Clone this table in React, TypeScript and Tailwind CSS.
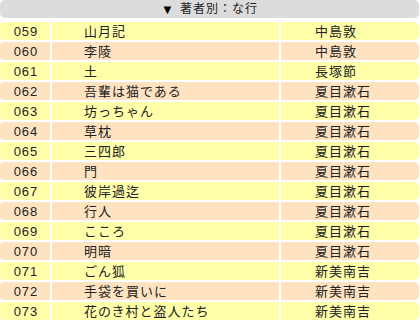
const rows: [string, string, string][] = [
  ['059', '山月記', '中島敦'],
  ['060', '李陵', '中島敦'],
  ['061', '土', '長塚節'],
  ['062', '吾輩は猫である', '夏目漱石'],
  ['063', '坊っちゃん', '夏目漱石'],
  ['064', '草枕', '夏目漱石'],
  ['065', '三四郎', '夏目漱石'],
  ['066', '門', '夏目漱石'],
  ['067', '彼岸過迄', '夏目漱石'],
  ['068', '行人', '夏目漱石'],
  ['069', 'こころ', '夏目漱石'],
  ['070', '明暗', '夏目漱石'],
  ['071', 'ごん狐', '新美南吉'],
  ['072', '手袋を買いに', '新美南吉'],
  ['073', '花のき村と盗人たち', '新美南吉'],
]

export default function App() {
  return (
    <div
      className="h-[320px] w-[420px] overflow-hidden bg-white text-[#222]"
      style={{ fontFamily: '"Liberation Sans", "Noto Sans CJK JP", sans-serif' }}
    >
      <div className="flex w-[419px] flex-col gap-[2px]">
        <div className="mb-[2px] flex h-[18px] items-center justify-center gap-[5px] rounded-[5px] bg-[#dcdcdc] text-[12px] leading-none tracking-[1px]">
          <span className="text-[13px] text-black">▼</span>
          <span>著者別：な行</span>
        </div>
        {rows.map(([no, title, author], i) => {
          const bg = i % 2 === 0 ? 'bg-[#ffffaa]' : 'bg-[#ffe3c1]'
          return (
            <div key={no} className="flex h-[18px] gap-[2px] text-[13px] leading-none tracking-[1px]">
              <div className={`${bg} flex w-[50px] items-center justify-center rounded-l-[4px] pl-[2px]`}>
                {no}
              </div>
              <div className={`${bg} flex flex-1 items-center pl-[32px]`}>{title}</div>
              <div className={`${bg} flex w-[138px] items-center rounded-r-[5px] pl-[34px]`}>
                {author}
              </div>
            </div>
          )
        })}
      </div>
    </div>
  )
}
